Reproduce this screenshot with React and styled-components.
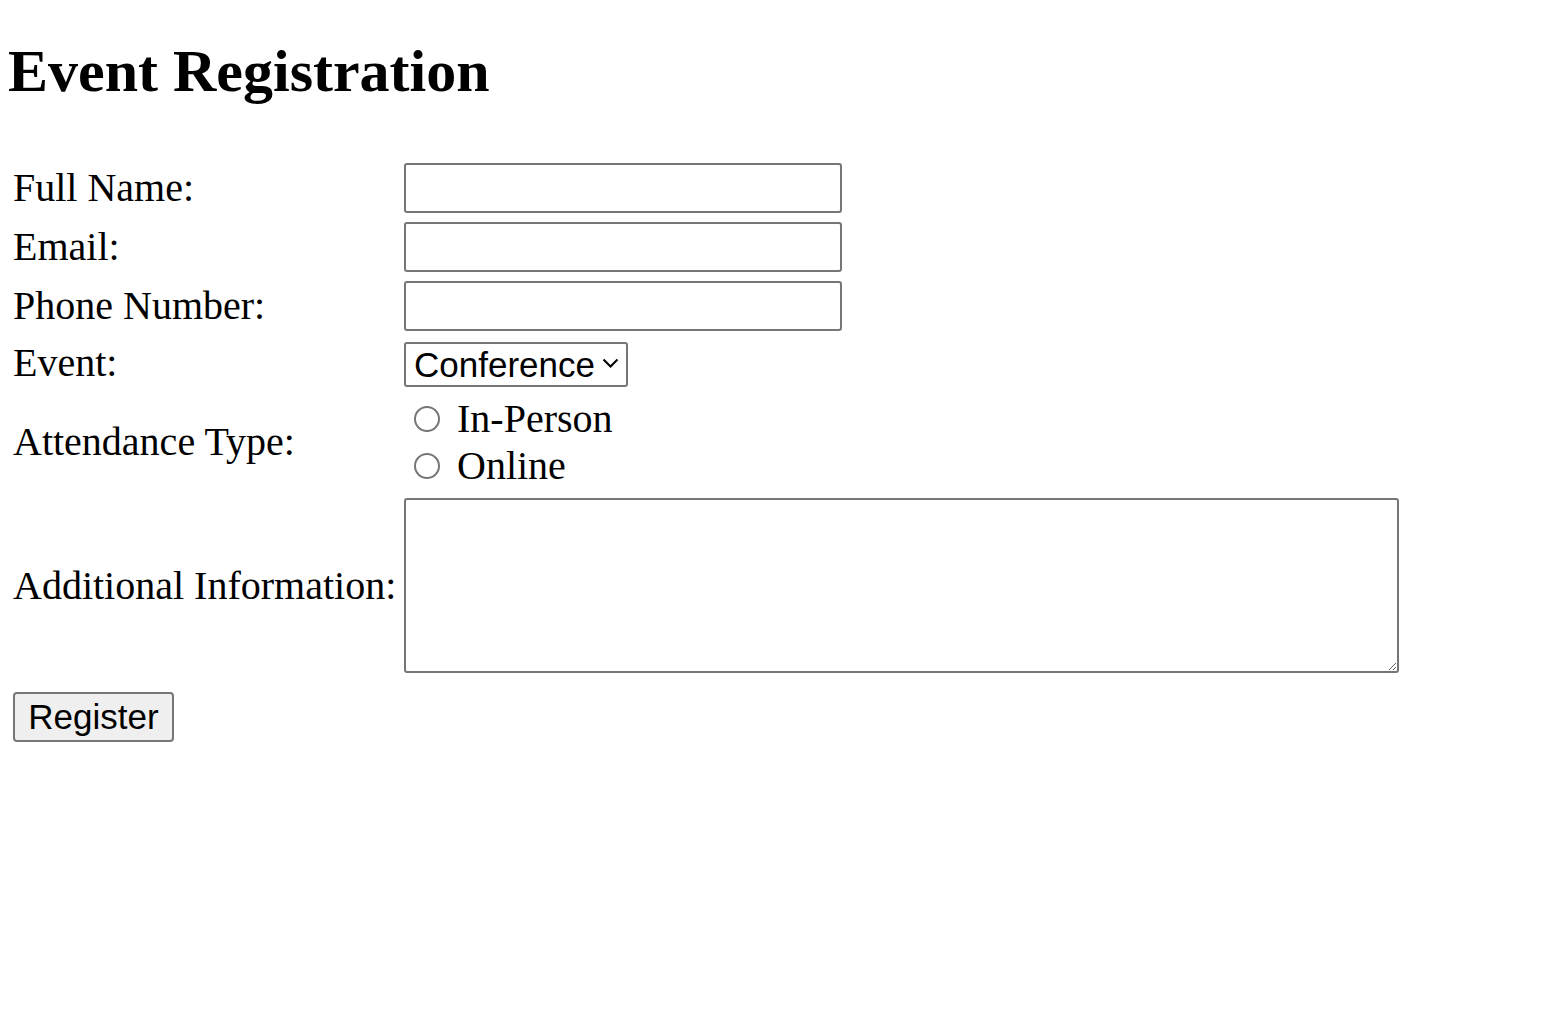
import React, { useState } from 'react';
import styled, { createGlobalStyle } from 'styled-components';

const GlobalStyle = createGlobalStyle`
  html, body {
    margin: 0;
    padding: 0;
    background: #ffffff;
    color: #000000;
  }
  body {
    font-family: "Liberation Serif", "Times New Roman", serif;
  }
`;

const Page = styled.div`
  padding: 0 8px;
`;

const Title = styled.h1`
  margin: 38px 0 59px;
  font-size: 60px;
  font-weight: bold;
  line-height: 66px;
`;

const Form = styled.form`
  padding-left: 5px;
`;

const Grid = styled.div`
  display: grid;
  grid-template-columns: 391px auto;
  row-gap: 9px;
  align-items: center;
`;

const Label = styled.label`
  font-size: 40px;
  line-height: 46px;
`;

const controlBorder = `
  border: 2px solid #767676;
  border-radius: 3px;
  box-sizing: border-box;
  font-family: "Liberation Sans", Arial, sans-serif;
  font-size: 35px;
  background: #ffffff;
  color: #000000;
  outline: none;
`;

const TextInput = styled.input`
  ${controlBorder}
  width: 438px;
  height: 50px;
  padding: 0 8px;
  justify-self: start;
`;

const SelectWrap = styled.div`
  position: relative;
  justify-self: start;
  align-self: end;
  width: 224px;
  height: 45px;
  margin-bottom: -1px;
`;

const Select = styled.select`
  ${controlBorder}
  appearance: none;
  -webkit-appearance: none;
  width: 100%;
  height: 100%;
  padding: 0 30px 0 8px;
  line-height: 41px;
`;

const Chevron = styled.svg`
  position: absolute;
  right: 9px;
  top: 15px;
  pointer-events: none;
`;

const RadioGroup = styled.div`
  display: flex;
  flex-direction: column;
`;

const RadioOption = styled.label`
  display: flex;
  align-items: center;
  font-size: 40px;
  line-height: 47px;
`;

const Radio = styled.input`
  appearance: none;
  -webkit-appearance: none;
  width: 26px;
  height: 26px;
  margin: 0 17px 0 10px;
  border: 2px solid #767676;
  border-radius: 50%;
  background: #ffffff;
  box-sizing: border-box;

  &:checked {
    border-color: #0075ff;
    box-shadow: inset 0 0 0 5px #ffffff;
    background: #0075ff;
  }
`;

const TextArea = styled.textarea`
  ${controlBorder}
  width: 995px;
  height: 175px;
  padding: 4px;
  justify-self: start;
  resize: both;
`;

const Submit = styled.button`
  margin-top: 19px;
  width: 161px;
  height: 50px;
  padding: 0;
  border: 2px solid #767676;
  border-radius: 4px;
  background: #efefef;
  font-family: "Liberation Sans", Arial, sans-serif;
  font-size: 35px;
  color: #000000;
  box-sizing: border-box;
`;

export default function App() {
  const [attendance, setAttendance] = useState('');

  function handleSubmit(event) {
    event.preventDefault();
  }

  return (
    <>
      <GlobalStyle />
      <Page>
        <Title>Event Registration</Title>
        <Form onSubmit={handleSubmit}>
          <Grid>
            <Label htmlFor="fullName">Full Name:</Label>
            <TextInput id="fullName" type="text" name="fullName" />

            <Label htmlFor="email">Email:</Label>
            <TextInput id="email" type="email" name="email" />

            <Label htmlFor="phone">Phone Number:</Label>
            <TextInput id="phone" type="tel" name="phone" />

            <Label htmlFor="event">Event:</Label>
            <SelectWrap>
              <Select id="event" name="event" defaultValue="conference">
                <option value="conference">Conference</option>
                <option value="workshop">Workshop</option>
                <option value="webinar">Webinar</option>
              </Select>
              <Chevron width="17" height="12" viewBox="0 0 17 12">
                <path d="M1.5 2.5 L8.5 9.5 L15.5 2.5" fill="none" stroke="#000" strokeWidth="2" />
              </Chevron>
            </SelectWrap>

            <Label>Attendance Type:</Label>
            <RadioGroup>
              <RadioOption>
                <Radio
                  type="radio"
                  name="attendance"
                  value="in-person"
                  checked={attendance === 'in-person'}
                  onChange={e => setAttendance(e.target.value)}
                />
                In-Person
              </RadioOption>
              <RadioOption>
                <Radio
                  type="radio"
                  name="attendance"
                  value="online"
                  checked={attendance === 'online'}
                  onChange={e => setAttendance(e.target.value)}
                />
                Online
              </RadioOption>
            </RadioGroup>

            <Label htmlFor="info">Additional Information:</Label>
            <TextArea id="info" name="info" />
          </Grid>
          <Submit type="submit">Register</Submit>
        </Form>
      </Page>
    </>
  );
}
